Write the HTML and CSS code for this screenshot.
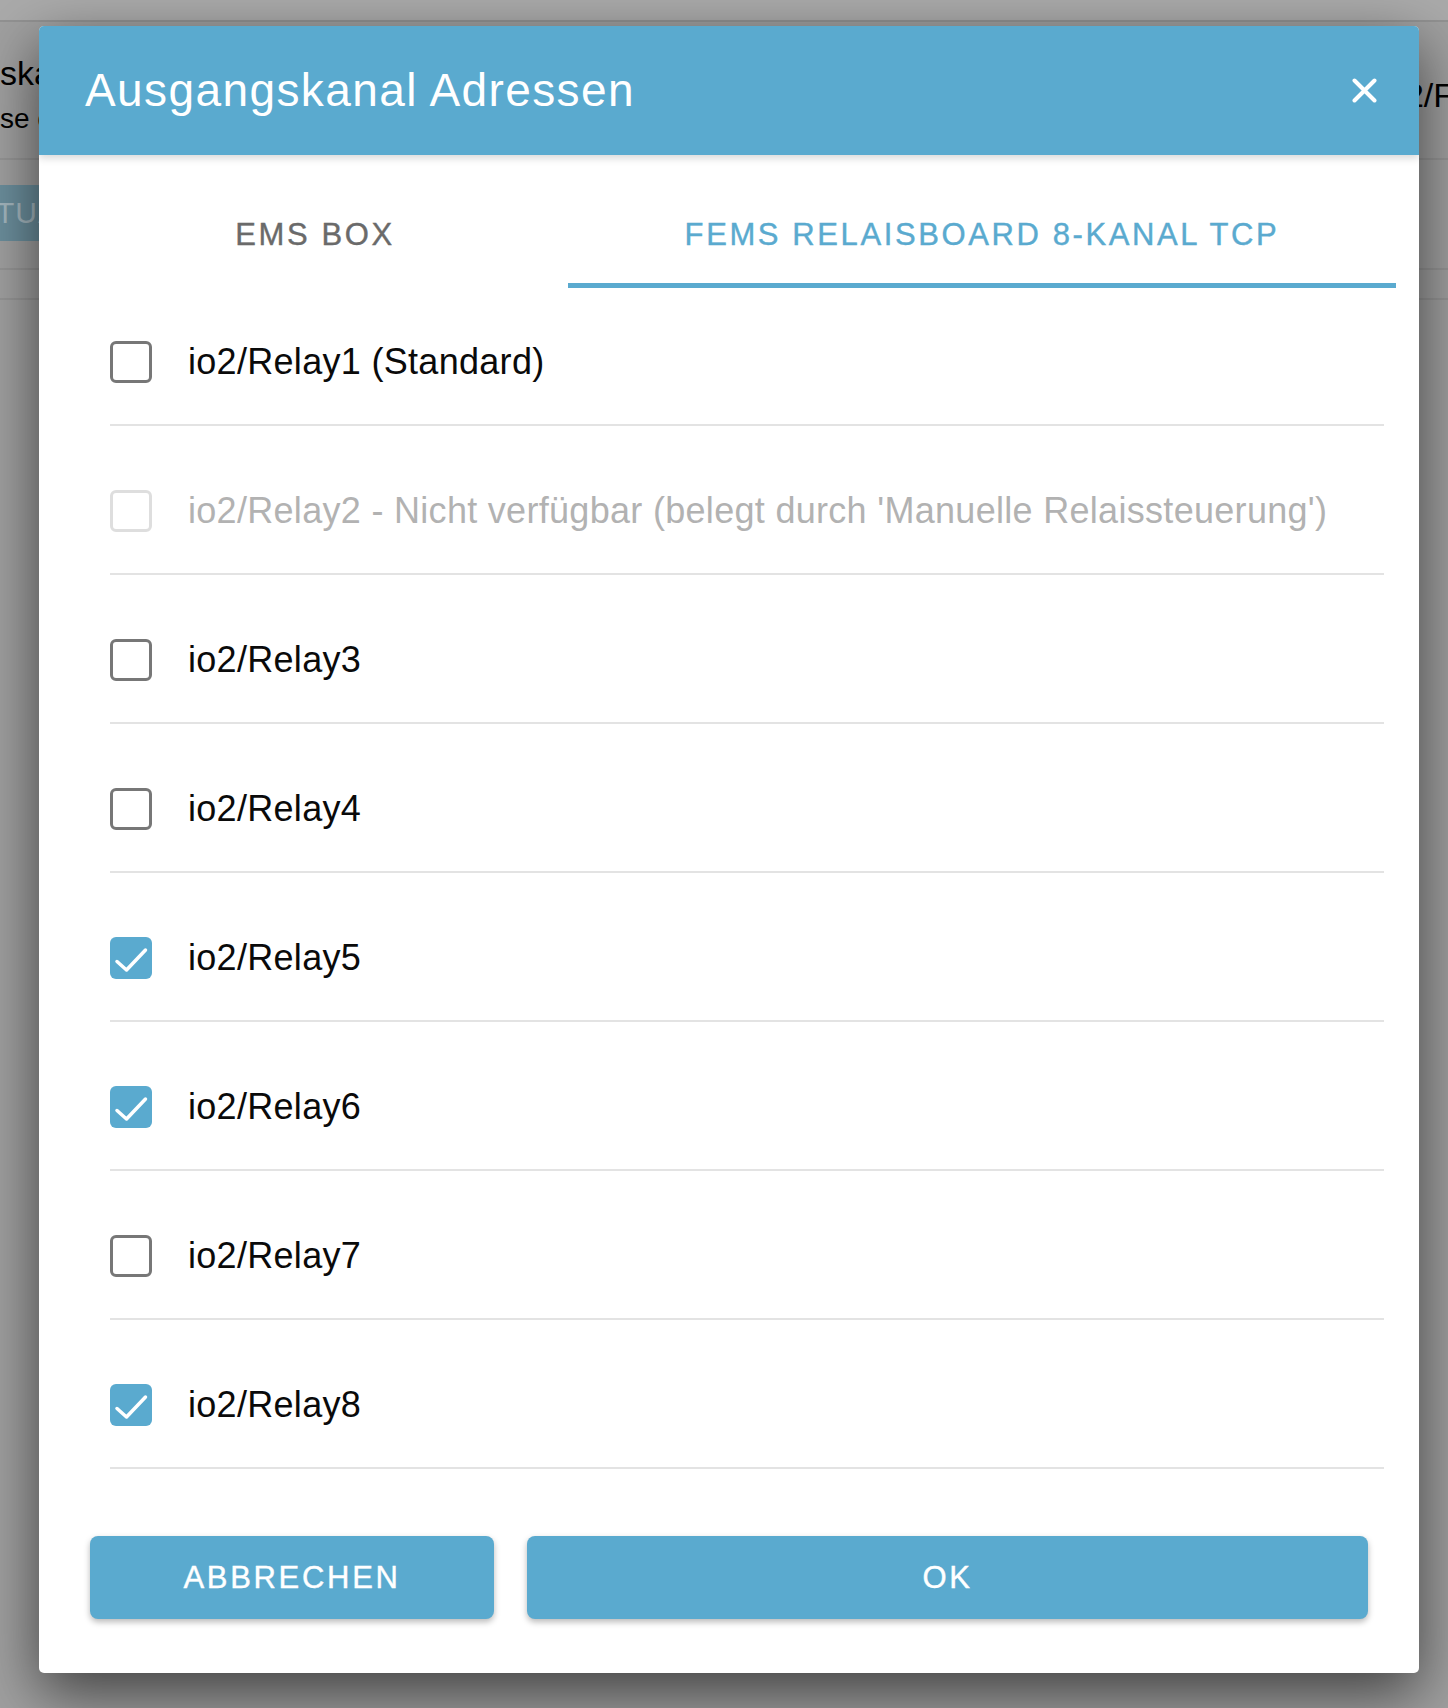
FILE: index.html
```html
<!DOCTYPE html>
<html lang="de">
<head>
    <meta charset="UTF-8">
    <meta name="viewport" content="width=device-width, initial-scale=1.0">
    <title>Ausgangskanal Adressen</title>
    <link rel="stylesheet" href="styles.css">
</head>
<body>

<!-- page behind the dialog -->
<div class="page">
    <div class="page-bar"></div>
    <div class="page-head">
        <div class="page-title">
            <span class="page-name">ska</span>
            <span class="page-sub">se c</span>
        </div>
        <span class="page-value">2/F</span>
    </div>
    <div class="page-actions">
        <span class="page-button">TUA</span>
    </div>
    <div class="page-row"></div>
</div>

<div class="modal">
    <header class="modal-header">
        <h1>Ausgangskanal Adressen</h1>
        <button class="close-button" aria-label="Schließen">
            <svg width="25" height="25" viewBox="0 0 25 25">
                <path d="M2.5 2.5 L22.5 22.5 M22.5 2.5 L2.5 22.5" stroke="#fff" stroke-width="4" stroke-linecap="round"/>
            </svg>
        </button>
    </header>

    <nav class="tabs">
        <a class="tab">EMS Box</a>
        <a class="tab active">FEMS Relaisboard 8-Kanal TCP</a>
    </nav>

    <ul class="relay-list" id="relay-list">
        <!-- rows are filled in by the script below -->
    </ul>

    <div class="modal-buttons">
        <button class="button">Abbrechen</button>
        <button class="button">OK</button>
    </div>
</div>

<script>
    const relays = [
        { name: "io2/Relay1 (Standard)", checked: false },
        { name: "io2/Relay2 - Nicht verfügbar (belegt durch 'Manuelle Relaissteuerung')", checked: false, disabled: true },
        { name: "io2/Relay3", checked: false },
        { name: "io2/Relay4", checked: false },
        { name: "io2/Relay5", checked: true },
        { name: "io2/Relay6", checked: true },
        { name: "io2/Relay7", checked: false },
        { name: "io2/Relay8", checked: true }
    ];

    const checkMark = `<svg width="42" height="42" viewBox="0 0 42 42"><polyline points="7,24.5 16.5,33 35.5,13" fill="none" stroke="#fff" stroke-width="3.5" stroke-linecap="round" stroke-linejoin="round"/></svg>`;

    function displayRelays() {
        const list = document.getElementById("relay-list");
        list.innerHTML = '';
        relays.forEach((relay, index) => {
            let cls = 'relay';
            if (relay.disabled) cls += ' disabled';
            list.innerHTML += `
                <li class="${cls}" onclick="toggleRelay(${index})">
                    <span class="checkbox${relay.checked ? ' checked' : ''}">${relay.checked ? checkMark : ''}</span>
                    <span class="relay-name">${relay.name}</span>
                </li>
            `;
        });
    }

    function toggleRelay(index) {
        if (relays[index].disabled) return;
        relays[index].checked = !relays[index].checked;
        displayRelays();
    }

    displayRelays();
</script>

</body>
</html>
```

FILE: styles.css
```css
html, body {
    margin: 0;
    padding: 0;
}

body {
    width: 1448px;
    height: 1708px;
    overflow: hidden;
    position: relative;
    font-family: 'Liberation Sans', Arial, sans-serif;
    background-color: #a0a0a0;
    color: #000;
}

/* dimmed page behind the dialog */
.page-bar {
    height: 20px;
    background-color: #aaaaaa;
    border-bottom: 2px solid #929292;
}

.page-head {
    height: 136px;
    display: flex;
    justify-content: space-between;
    border-bottom: 2px solid #959595;
}

.page-title {
    display: flex;
    flex-direction: column;
}

.page-name {
    font-size: 34px;
    margin: 32px 0 0 0;
}

.page-sub {
    font-size: 28px;
    margin: 10px 0 0 0;
}

.page-value {
    font-size: 34px;
    margin-top: 54px;
    margin-right: -6px;
}

.page-actions {
    height: 108px;
    border-bottom: 2px solid #959595;
}

.page-button {
    display: inline-block;
    margin: 25px 0 0 -10px;
    padding: 0 16px 0 6px;
    height: 56px;
    line-height: 56px;
    font-size: 30px;
    letter-spacing: 1px;
    background-color: #6b8e9c;
    color: #a4b6be;
}

.page-row {
    height: 28px;
    border-bottom: 2px solid #959595;
}

/* dialog */
.modal {
    position: absolute;
    left: 39px;
    top: 26px;
    width: 1380px;
    height: 1647px;
    background-color: #fff;
    border-radius: 5px;
    box-shadow: 0 20px 60px rgba(0, 0, 0, 0.6);
    overflow: hidden;
}

.modal-header {
    height: 129px;
    background-color: #5aaacf;
    display: flex;
    align-items: center;
    justify-content: space-between;
    padding: 0 42px 0 46px;
    box-shadow: 0 3px 8px rgba(0, 0, 0, 0.16);
    position: relative;
}

.modal-header h1 {
    margin: 0 0 2px;
    font-size: 46px;
    font-weight: normal;
    letter-spacing: 1.4px;
    color: #fff;
}

.close-button {
    background: none;
    border: none;
    padding: 0;
    width: 25px;
    height: 25px;
    cursor: pointer;
}

.close-button svg {
    display: block;
}

.tabs {
    display: grid;
    grid-template-columns: 506fr 828fr;
    padding: 0 23px;
}

.tab {
    display: block;
    text-align: center;
    padding: 62px 0 30px;
    line-height: 36px;
    font-size: 31px;
    letter-spacing: 2.6px;
    text-transform: uppercase;
    color: #6a6a6a;
    border-bottom: 5px solid transparent;
    -webkit-text-stroke: 0.4px currentColor;
    cursor: pointer;
}

.tab.active {
    color: #5aaacf;
    border-bottom-color: #5aaacf;
}

.relay-list {
    list-style: none;
    margin: 0 35px 0 71px;
    padding: 0;
}

.relay {
    display: flex;
    align-items: center;
    padding: 64px 0 41px;
    border-bottom: 2px solid #e3e3e3;
    cursor: pointer;
}

.relay:first-child {
    padding-top: 53px;
}

.checkbox {
    flex: 0 0 auto;
    box-sizing: border-box;
    width: 42px;
    height: 42px;
    border: 3.5px solid #777;
    border-radius: 6px;
    margin-right: 36px;
}

.checkbox.checked {
    border: none;
    background-color: #5aaacf;
}

.checkbox svg {
    display: block;
}

.relay-name {
    font-size: 36px;
    line-height: 42px;
    letter-spacing: 0.3px;
    color: #0a0a0a;
}

.relay.disabled {
    cursor: default;
}

.relay.disabled .checkbox {
    border-color: #dedede;
}

.relay.disabled .relay-name {
    color: #b2b2b2;
}

.modal-buttons {
    display: grid;
    grid-template-columns: 404fr 841fr;
    gap: 33px;
    padding: 67px 51px 0;
}

.button {
    height: 83px;
    border: none;
    border-radius: 8px;
    background-color: #5aaacf;
    color: #fff;
    font-family: 'Liberation Sans', Arial, sans-serif;
    font-size: 31px;
    letter-spacing: 2.7px;
    text-transform: uppercase;
    -webkit-text-stroke: 0.4px currentColor;
    box-shadow: 0 3px 6px rgba(0, 0, 0, 0.28);
    cursor: pointer;
}
```
